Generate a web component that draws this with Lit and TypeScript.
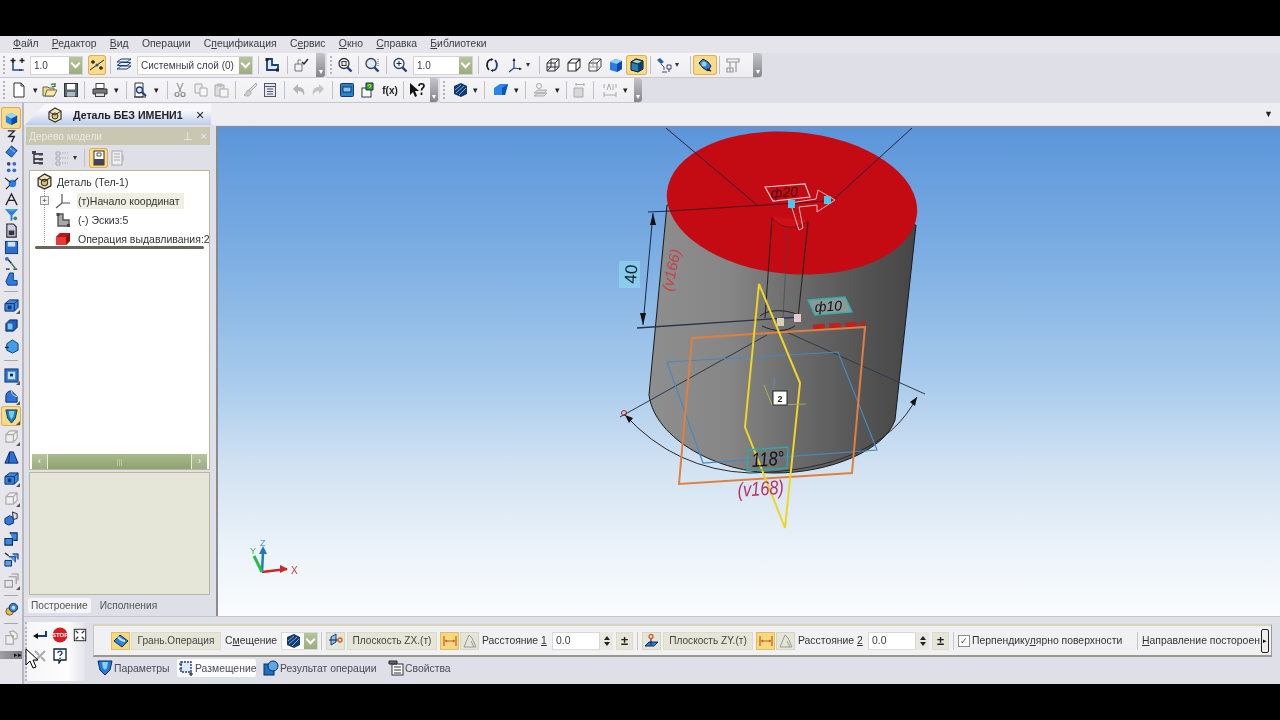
import { LitElement, html, css, svg, nothing } from 'lit';
import { customElement } from 'lit/decorators.js';

const NAVY = '#1c3f7c';

// all icons are drawn on a 16x16 grid
const ICONS: Record<string, unknown> = {
  snap: svg`<path d="M4 4v9h9" fill="none" stroke="#2a4f8f" stroke-width="1.6"/><path d="M4 1v5M1.500 3.500h5M13 1v5M10.500 3.500h5" stroke="#222" stroke-width="1.400"/><path d="M10 13h5" stroke="#222"/>`,
  snapOn: svg`<path d="M1 13L15 3" stroke="#222"/><path d="M4 3v4M2 5h4M12 9v4M10 11h4" stroke="#222" stroke-width="1.300"/><circle cx="8" cy="8" r="1.500" fill="#2a4f8f"/>`,
  layers: svg`<path d="M1 5l4-3h10l-4 3zM1 8.500l4-3h10l-4 3zM1 12l4-3h10l-4 3z" fill="#e8eefc" stroke="${NAVY}"/>`,
  sketch: svg`<path d="M3 2v11h11V8H8V2z" fill="#dfe8f8" stroke="${NAVY}" stroke-width="1.800"/><rect x="1.500" y="1" width="3" height="3" fill="#222"/><rect x="12" y="11.500" width="3" height="3" fill="#222"/>`,
  checkSk: svg`<path d="M2 14V7h7v7zM5 7V3h3" fill="none" stroke="#777"/><path d="M9 5l2 2 4-5" fill="none" stroke="#222" stroke-width="1.400"/>`,
  zoomBox: svg`<circle cx="7" cy="6.500" r="5" fill="#eef3fb" stroke="#333" stroke-width="1.300"/><path d="M10.500 10.500l4 4" stroke="${NAVY}" stroke-width="2.400"/><rect x="5" y="4.500" width="4" height="4" fill="none" stroke="#333"/>`,
  zoomAll: svg`<circle cx="7" cy="6.500" r="5" fill="#dfe9f8" stroke="#345" stroke-width="1.300"/><path d="M10.500 10.500l4 4" stroke="${NAVY}" stroke-width="2.400"/><path d="M14 2v7" stroke="#555" stroke-dasharray="1 1"/>`,
  zoomIn: svg`<circle cx="7" cy="6.500" r="5" fill="#eef3fb" stroke="#345" stroke-width="1.300"/><path d="M10.500 10.500l4 4" stroke="${NAVY}" stroke-width="2.400"/><path d="M4.500 6.500h5M7 4v5" stroke="#222"/>`,
  rotate: svg`<path d="M7 2.500C3 3 1.500 9 5 13" fill="none" stroke="#222" stroke-width="1.700"/><path d="M9 13.500C13 13 14.500 7 11 3" fill="none" stroke="${NAVY}" stroke-width="1.700"/><path d="M7 1v3L9.500 2.500zM9 15v-3L6.500 13.500z" fill="#222"/>`,
  axes: svg`<path d="M7 2v9M7 11l7 1M7 11l-5 4" stroke="${NAVY}" stroke-width="1.200" fill="none"/><path d="M5.500 4L7 1l1.500 3zM12 10.500l3 1.500-3 1z" fill="#222"/>`,
  wire: svg`<path d="M2 6l4-4h8v8l-4 4H2zM2 6h8v8M10 6l4-4M6 2v8H2M6 10h8M6 10l-4 4" fill="none" stroke="#333"/>`,
  hidden: svg`<path d="M2 6l4-4h8v8l-4 4H2zM2 6h8v8M10 6l4-4" fill="#fff" stroke="#333" stroke-width="1.100"/>`,
  thin: svg`<path d="M2 6l4-4h8v8l-4 4H2zM2 6h8v8M10 6l4-4" fill="#f4f4f4" stroke="#444"/><path d="M6 2v8H2M6 10h8" fill="none" stroke="#999"/>`,
  solid: svg`<path d="M2 5l5-3 7 2v8l-5 3-7-2z" fill="#2b7be4"/><path d="M2 5l7 2 5-3-7-2z" fill="#8fd0fa"/><path d="M9 7v8l5-3V4z" fill="#0f46a8"/>`,
  shaded: svg`<path d="M2 5l5-3 7 2v8l-5 3-7-2z" fill="#2a7fb8" stroke="#111"/><path d="M2 5l7 2 5-3-7-2z" fill="#90d4e0" stroke="#111"/><path d="M9 7v8l5-3V4z" fill="#0c3f70"/>`,
  lamp: svg`<path d="M1 3l3-2 4 4-3 2z" fill="#2a5fa8"/><path d="M5 7l3 3v3M6 15h5M11 8h4v4h-4zM13 12v3" fill="none" stroke="#446"/>`,
  mate: svg`<path d="M2 6l4-4 5 3 3 4-3 5-5-3z" fill="#2f7bd8" stroke="#123"/><circle cx="7" cy="7" r="2.500" fill="#8cd3f0"/><path d="M10 12l4 2" stroke="#222" stroke-width="1.500"/>`,
  grayTool: svg`<path d="M2 2h12v3H2zM5 5v10M11 5v10M2 11h6v4H2z" fill="none" stroke="#999" stroke-width="1.200"/>`,
  file: svg`<path d="M3 1h7l3 3v11H3z" fill="#fff" stroke="#333"/><path d="M10 1v3h3" fill="none" stroke="#333"/>`,
  open: svg`<path d="M1 5h5l1 1h5v8H1z" fill="#f3d98a" stroke="#665"/><path d="M3 14l2-6h10l-3 6z" fill="#fbe9a8" stroke="#665"/><path d="M9 3c2-2 4-1 4 1M13 1v3.500h-3" fill="none" stroke="#2a7a3a" stroke-width="1.200"/>`,
  save: svg`<rect x="1.500" y="1.500" width="13" height="13" fill="#586878" stroke="#333"/><rect x="4" y="2" width="8" height="5.500" fill="#fff"/><rect x="4" y="10" width="8" height="4.500" fill="#b0b8c0"/>`,
  print: svg`<rect x="4" y="1.500" width="8" height="5" fill="#fff" stroke="#444"/><path d="M1 7h14v5H1z" fill="#77797f" stroke="#333"/><rect x="3.500" y="11" width="9" height="3.500" fill="#ddd" stroke="#444"/>`,
  preview: svg`<path d="M3 1h8v14H3z" fill="#fff" stroke="#334"/><circle cx="7.500" cy="8" r="3" fill="#dfe9f8" stroke="${NAVY}" stroke-width="1.300"/><path d="M10 10l4 4" stroke="${NAVY}" stroke-width="2"/><path d="M2 15h12" stroke="#334"/>`,
  cut: svg`<path d="M5 1l4 9M11 1L7 10" stroke="#999" stroke-width="1.200"/><circle cx="5" cy="12.500" r="2" fill="none" stroke="#888" stroke-width="1.200"/><circle cx="11" cy="12.500" r="2" fill="none" stroke="#888" stroke-width="1.200"/>`,
  copy: svg`<path d="M2 2h7v9H2z" fill="#eee" stroke="#aaa"/><path d="M7 6h7v8H7z" fill="#f6f6f6" stroke="#aaa"/>`,
  paste: svg`<path d="M2 3h9v11H2z" fill="#ddd" stroke="#aaa"/><rect x="4" y="1.500" width="5" height="3" fill="#bbb"/><path d="M7 7h8v8H7z" fill="#f4f4f4" stroke="#aaa"/>`,
  brush: svg`<path d="M14 1L7 8l1.500 1.500L15 3z" fill="#ddd" stroke="#aaa"/><path d="M7 8c-3 0-2 4-5 5 3 2 7 1 7-3z" fill="#ccc" stroke="#aaa"/>`,
  list: svg`<rect x="2.500" y="1.500" width="11" height="13" fill="#dfe6f0" stroke="#556"/><path d="M2.500 4.500h11M5 7h6M5 9.500h6M5 12h6" stroke="#556"/>`,
  undo: svg`<path d="M2 7l5-5v3c5 0 7 3 6 9-1-4-3-5-6-5v3z" fill="#b4b4b4"/>`,
  redo: svg`<path d="M14 7L9 2v3C4 5 2 8 3 14c1-4 3-5 6-5v3z" fill="#c4c4c4"/>`,
  blueBox: svg`<rect x="1.500" y="1.500" width="13" height="13" rx="1" fill="#2a7fc8" stroke="#123a70"/><rect x="4" y="5" width="8" height="5" fill="#7fc4ec" stroke="#123a70"/>`,
  treeQ: svg`<rect x="2" y="6" width="9" height="9" fill="#fff" stroke="#334"/><path d="M6 1h7v7H6z" fill="#3a9a4a" stroke="#134"/><path d="M8 4c0-2 3-2 3 0 0 1-1.500 1-1.500 2" fill="none" stroke="#ff0"/>`,
  helpPtr: svg`<path d="M1 1l0 12 3-3 2 5 2-1-2-5h4z" fill="#111"/><path d="M10 4c0-3 5-3 5 0 0 2-2.500 2-2.500 4.500M12.500 10.500v2.500" fill="none" stroke="#111" stroke-width="1.700"/>`,
  hatch: svg`<path d="M2 4l7-3 6 3v8l-6 3-7-3z" fill="#123a70"/><path d="M3 8l6-5M4 11l8-7M7 13l7-7" stroke="#7fb0e0"/>`,
  wedge: svg`<path d="M1 6l6-4h8l-3 11H1z" fill="#2b86e4"/><path d="M9 6l6-4-3 11H9z" fill="#0f54b8"/>`,
  grayStack: svg`<circle cx="6" cy="4" r="2.500" fill="none" stroke="#aaa"/><path d="M1 11l4-3h9l-3 3zM1 14l4-3h9l-3 3z" fill="#ddd" stroke="#aaa"/>`,
  grayDim: svg`<path d="M2 6v9h9V6zM4 1v3M12 1v3M4 2.500h8" fill="#d8d8d8" stroke="#aaa"/>`,
  grayA: svg`<path d="M2 2v4M14 2v4M2 13h12M2 10v5M14 10v5" stroke="#aaa"/><path d="M5 8l2-6 2 6M11 2v6" fill="none" stroke="#aaa"/>`,
  part: svg`<path d="M2 5l6-4 6 3v8l-6 3-6-3z" fill="#f2e6b8" stroke="#333" stroke-width="1.200"/><circle cx="8" cy="9" r="3" fill="#d8c070" stroke="#333"/><path d="M2 5l6 3 6-4" fill="none" stroke="#333"/>`,
  treeTool: svg`<path d="M4 1v13M4 4h5M4 9h5M4 13h5" stroke="#222" stroke-width="1.300"/><rect x="2" y="1" width="4" height="3" fill="#445"/><rect x="9" y="3" width="4" height="2.500" fill="#445"/><rect x="9" y="8" width="4" height="2.500" fill="#445"/><rect x="9" y="12" width="4" height="2.500" fill="#445"/>`,
  treeGray: svg`<path d="M2 2h4v3H2zM2 7h4v3H2zM2 12h4v3H2z" fill="none" stroke="#aaa"/><path d="M8 3h6M8 8h6M8 13h6" stroke="#aaa" stroke-dasharray="1.500 1"/>`,
  treeDoc: svg`<rect x="3" y="1" width="10" height="14" fill="#fff" stroke="#333"/><rect x="3" y="9" width="10" height="6" fill="#445"/><path d="M6 3h4v3H6z" fill="none" stroke="#555"/>`,
  treeDoc2: svg`<rect x="2" y="1" width="10" height="14" fill="#eee" stroke="#aaa"/><path d="M4 4h6M4 7h6M4 10h6M13 5v6" stroke="#aaa"/>`,
  origin: svg`<path d="M7 1v9H15M7 10L1 15" fill="none" stroke="#555" stroke-width="1.200"/>`,
  sketchGray: svg`<path d="M3 2v12h11V8H8V2z" fill="#a8a8a8" stroke="#555" stroke-width="1.400"/><rect x="1.500" y="1" width="3" height="3" fill="#444"/><rect x="12" y="12" width="3" height="3" fill="#444"/>`,
  redCube: svg`<path d="M1 6l4-4h10v8l-4 4H1z" fill="#e83838"/><path d="M1 6l4-4h10l-4 4z" fill="#b81818"/><path d="M11 6l4-4v8l-4 4z" fill="#901010"/>`,
  railSel: svg`<path d="M2 5l6-3 6 3v7l-6 3-6-3z" fill="#2b86e4"/><path d="M2 5l6 3 6-3-6-3z" fill="#8fd8fa"/><path d="M8 8v7l6-3V5z" fill="#0c4ca8"/>`,
  squiggle: svg`<path d="M4 2h7L5 8h6l-3 6" fill="none" stroke="#223" stroke-width="1.400"/>`,
  diamond: svg`<path d="M2 9l6-7 6 5-6 7z" fill="#2b7be4" stroke="#123a70"/><path d="M6 4l6 5" stroke="#9cd4f4"/>`,
  dots: svg`<circle cx="5" cy="4" r="2" fill="#446"/><circle cx="11" cy="4" r="2" fill="#2b6fd0"/><circle cx="5" cy="11" r="2" fill="#2b6fd0"/><circle cx="11" cy="11" r="2" fill="#2b6fd0"/>`,
  plug: svg`<circle cx="9" cy="8" r="4" fill="#2b7be4"/><path d="M1 2l6 5M15 2l-4 4M2 14l4-4" stroke="#223" stroke-width="1.300"/>`,
  compass: svg`<path d="M2 14L8 2l6 12M5 9h6" fill="none" stroke="#223" stroke-width="1.400"/>`,
  funnel: svg`<path d="M1 2h14L9 9v5l-2 1V9z" fill="#2b7be4"/><path d="M1 2l7 3 7-3" fill="#4ac" /><circle cx="12" cy="12" r="2" fill="#3a8a4a"/>`,
  docTool: svg`<path d="M3 1h7l3 3v11H3z" fill="#ccd" stroke="#223" stroke-width="1.200"/><path d="M5 8h6v5H5z" fill="#334"/>`,
  floppy: svg`<rect x="1.500" y="1.500" width="13" height="13" fill="#2b6fd0" stroke="#123a70"/><rect x="4" y="2" width="8" height="5" fill="#cfe4fa"/>`,
  route: svg`<path d="M3 2l5 6M2 14h4M10 14h4" stroke="#223" stroke-width="1.400"/><circle cx="3" cy="3" r="2" fill="#2b6fd0"/><path d="M8 8l4 5" stroke="#2a8a4a" stroke-width="1.500"/>`,
  sock: svg`<path d="M6 1h4v8h4v5H4l-2-4z" fill="#2b7be4" stroke="#123a70"/>`,
  extr: svg`<path d="M1 6l5-4h9v8l-4 4H1z" fill="#3a88e0" stroke="#0f2f68"/><path d="M1 6h10v8M11 6l4-4" fill="none" stroke="#0f2f68"/><rect x="4" y="8" width="4" height="4" fill="#123a70"/>`,
  boxIn: svg`<path d="M2 6l4-4h8v8l-4 4H2z" fill="#1f5fc0" stroke="#0c2a60"/><rect x="4" y="6" width="5" height="6" fill="#7fc4ec"/>`,
  boxCut: svg`<path d="M3 5l6-4 6 4v7l-6 3-6-3z" fill="#3fa0e8" stroke="#0c3a70"/><path d="M1 9h4" stroke="#222" stroke-width="1.500"/>`,
  frame: svg`<rect x="1" y="1" width="14" height="14" fill="#2f74c4" stroke="#0c3a70"/><rect x="4" y="4" width="8" height="8" fill="#bfe0f8"/><rect x="6.500" y="6" width="3" height="3" fill="#124"/>`,
  round: svg`<path d="M2 14V7c0-3 3-5 6-5l6 6v6z" fill="#2f74d4" stroke="#0c2a60"/><path d="M8 2c0 4 3 6 6 6" fill="none" stroke="#bfe0f8"/>`,
  shield: svg`<path d="M2 1h12l-2 9-4 5-4-5z" fill="#1f82c0" stroke="#0c3a60"/><path d="M5 2h6l-1 6-2 3-2-3z" fill="#6fd0e8"/>`,
  grayBox: svg`<path d="M2 6l4-4h8v8l-4 4H2zM2 6h8v8M10 6l4-4" fill="#eee" stroke="#aaa" stroke-width="1.200"/>`,
  prism: svg`<path d="M1 14L6 2h4l5 12z" fill="#2b6fd8" stroke="#0c2a60"/><path d="M6 2l-1 12" stroke="#0c2a60"/>`,
  gear3: svg`<path d="M1 8l5-3 4 2v6l-5 2-4-2z" fill="#2b7be4" stroke="#0c2a60"/><path d="M9 1l5 2v5l-4 1z" fill="#dde" stroke="#223"/>`,
  double: svg`<path d="M1 8h8v7H1zM6 2h8v8h-4" fill="#3a8ae4" stroke="#0c2a60" stroke-width="1.200"/>`,
  triple: svg`<path d="M1 9h7v6H1zM5 5h7v6M9 2h6v6" fill="#5aa0e8" stroke="#0c2a60"/><path d="M1 1l4 3" stroke="#222" stroke-width="1.500"/>`,
  grayCopy: svg`<path d="M1 8h8v7H1zM5 4h8v8M8 1h7v7" fill="none" stroke="#999" stroke-width="1.200"/>`,
  rings: svg`<circle cx="6" cy="10" r="4" fill="#e8b848" stroke="#654"/><circle cx="10" cy="6" r="4.500" fill="#2b86d4" stroke="#0c2a60"/><circle cx="10" cy="6" r="2" fill="#bfe0f8"/>`,
  grayPage: svg`<path d="M2 6h8v9H2zM6 2l4-1 4 3v5l-4 1z" fill="#eee" stroke="#aaa" stroke-width="1.200"/>`,
  enter: svg`<path d="M14 4v5H5" fill="none" stroke="#123a90" stroke-width="2"/><path d="M1 9l5-3v6z" fill="#111"/>`,
  stop: svg`<circle cx="8" cy="8" r="7.500" fill="#d81c24"/>`,
  expand: svg`<rect x="1.500" y="1.500" width="13" height="13" fill="#fff" stroke="#333" stroke-width="1.200"/><path d="M3 3l3 3M13 3l-3 3M3 13l3-3M13 13l-3-3" stroke="#333" stroke-width="1.400"/>`,
  grayX: svg`<path d="M3 13L13 3M3 3l4 4M9 9l4 4" stroke="#aaa" stroke-width="2"/>`,
  help: svg`<path d="M2 1h12v11H9l-2 3v-3H2z" fill="#fff" stroke="#123" stroke-width="1.300"/><path d="M6 5c0-2.500 4-2.500 4 0 0 1.500-2 1.500-2 3M8 9.500v1.500" fill="none" stroke="#123a90" stroke-width="1.400"/>`,
  face: svg`<path d="M1 8l6-6 8 6-6 6z" fill="#2f84d8" stroke="#0c2a60"/><path d="M5 4c2 2 5 4 7 4" stroke="#bfe4fa" stroke-width="2" fill="none"/>`,
  plane1: svg`<path d="M3 12V4l5-3v8z" fill="#8fc0f0" stroke="#123a90"/><path d="M1 7h9" stroke="#123" /><circle cx="12" cy="7" r="2" fill="none" stroke="#d85a20" stroke-width="1.300"/>`,
  plane2: svg`<path d="M1 13l4-4h9l-4 4z" fill="#2b7be4" stroke="#0c2a60"/><path d="M7 5v7" stroke="#123"/><circle cx="7" cy="3.500" r="2" fill="none" stroke="#d85a20" stroke-width="1.300"/>`,
  offs: svg`<path d="M2 3v10M14 3v10M3 8h10" stroke="#c85a20" stroke-width="1.200"/><path d="M3 8l2-1.500v3zM13 8l-2-1.500v3z" fill="#c85a20"/>`,
  angle: svg`<path d="M2 14L7 2l3 3 4 9zM9 8l3 6" fill="none" stroke="#999"/>`,
  params: svg`<path d="M1 1h14l-2 9-5 5-5-5z" fill="#2a78d8" stroke="#0c2a60"/><path d="M5 2h6l-1 6-2 2-2-2z" fill="#80d4f0"/>`,
  place: svg`<rect x="3" y="2" width="10" height="10" fill="#dfe8f8" stroke="${NAVY}" stroke-width="1.400" stroke-dasharray="2 1"/><path d="M1 4h3M1 9h3M11 14h4M13 12v4" stroke="#123" stroke-width="1.200"/>`,
  result: svg`<rect x="1" y="4" width="10" height="11" fill="#1f6fc0" stroke="#0c2a60"/><circle cx="10" cy="6" r="5" fill="#5aa8e8" stroke="#0c2a60"/>`,
  props: svg`<rect x="4" y="4" width="11" height="11" fill="#fff" stroke="#333"/><path d="M6 7h7M6 10h7M6 13h7" stroke="#333"/><path d="M1 1h8v3H1z" fill="#667" stroke="#222"/>`,
};

type Item =
  | { t: 'grip'; w: number }
  | { t: 'btn'; i: string; w: number; sel?: boolean; caret?: boolean }
  | { t: 'sep'; w: number }
  | { t: 'gap'; w: number }
  | { t: 'combo'; text: string; w: number }
  | { t: 'chev'; w: number }
  | { t: 'text'; text: string; w: number; bold?: boolean };

const grip = (w = 8): Item => ({ t: 'grip', w });
const btn = (i: string, w: number, o: { sel?: boolean; caret?: boolean } = {}): Item => ({ t: 'btn', i, w, ...o });
const sep = (w = 6): Item => ({ t: 'sep', w });
const gap = (w: number): Item => ({ t: 'gap', w });
const combo = (text: string, w: number): Item => ({ t: 'combo', text, w });
const chev = (w = 9): Item => ({ t: 'chev', w });
const caret = (w: number): Item => ({ t: 'text', text: '▾', w });

const ROW1A: Item[] = [
  grip(), btn('snap', 18), gap(4), combo('1.0', 53), gap(5), btn('snapOn', 18, { sel: true }), sep(8),
  btn('layers', 20), gap(3), combo('Системный слой (0)', 116), sep(10), btn('sketch', 18), sep(12),
  btn('checkSk', 16), gap(7), chev(),
];
const ROW1B: Item[] = [
  grip(), btn('zoomBox', 20), sep(6), btn('zoomAll', 22), sep(6), btn('zoomIn', 22), gap(2), combo('1.0', 60), sep(10),
  btn('rotate', 18), btn('axes', 35, { caret: true }), sep(6), btn('wire', 21), btn('hidden', 21), btn('thin', 21),
  btn('solid', 21), btn('shaded', 21, { sel: true }), sep(6), btn('lamp', 28, { caret: true }), gap(6), sep(6),
  btn('mate', 24, { sel: true }), sep(4), btn('grayTool', 24), gap(8), chev(),
];
const ROW2A: Item[] = [
  grip(), btn('file', 22), caret(10), btn('open', 20), btn('save', 21), sep(6),
  btn('print', 25), caret(8), sep(12), btn('preview', 16), caret(16), sep(6),
  btn('cut', 20), btn('copy', 22), btn('paste', 18), sep(10), btn('brush', 19), btn('list', 22), sep(6),
  btn('undo', 24), btn('redo', 14), sep(14), btn('blueBox', 16), btn('treeQ', 26), { t: 'text', text: 'f(x)', w: 18, bold: true }, sep(8),
  btn('helpPtr', 20), gap(3), chev(8),
];
const ROW2B: Item[] = [
  grip(), gap(4), btn('hatch', 16), caret(14), sep(4), gap(7), btn('wedge', 16), caret(14), sep(4), gap(6),
  btn('grayStack', 16), caret(16), sep(2), gap(5), btn('grayDim', 16), sep(10), gap(4), btn('grayA', 16), caret(14), gap(2), chev(8),
];

// [icon, cell height, selected, corner tick]; '-' is a separator
const RAIL: Array<[string, number, boolean?, boolean?]> = [
  ['railSel', 22, true], ['squiggle', 14], ['diamond', 16], ['dots', 16], ['plug', 16], ['compass', 16], ['funnel', 15],
  ['docTool', 17], ['floppy', 16], ['route', 17], ['sock', 15], ['-', 9], ['extr', 19, false, true], ['boxIn', 20], ['boxCut', 22],
  ['-', 7], ['frame', 22, false, true], ['round', 20, false, true], ['shield', 20, true, true], ['grayBox', 21, false, true], ['prism', 21],
  ['extr', 20, false, true], ['grayBox', 20, false, true], ['gear3', 21], ['double', 19], ['triple', 22], ['grayCopy', 21, false, true],
  ['-', 9], ['rings', 19], ['-', 9], ['grayPage', 18],
];

const PROP_TABS = [
  { i: 'params', label: 'Параметры', w: 81, mr: 0 },
  { i: 'place', label: 'Размещение', w: 79, mr: 6, active: true },
  { i: 'result', label: 'Результат операции', w: 118, mr: 7 },
  { i: 'props', label: 'Свойства', w: 70, mr: 0 },
];

function icon(name: string, size = 16) {
  return html`<svg class="ic" viewBox="0 0 16 16" width=${size} height=${size}>${ICONS[name]}</svg>`;
}

@customElement('cad-view')
export class CadView extends LitElement {
  static styles = css`
    :host { display: block; height: 100%; }
    .canvas { display: block; background: linear-gradient(#5b95da 0%, #83b2e4 30%, #a9cbec 52%, #d3e3f2 70%, #eef4fa 88%, #fafcfe 100%); }
    text { font-family: 'Liberation Sans', sans-serif; }
  `;

  render() {
    return html`<svg class="canvas" viewBox="218 127 1062 490" width="1062" height="490">
      <defs>
        <linearGradient id="body" x1="0" x2="1" y1="0" y2="0">
          <stop offset="0" stop-color="#8e8e8e"/><stop offset=".3" stop-color="#868686"/>
          <stop offset=".55" stop-color="#6b6b6b"/><stop offset=".85" stop-color="#505050"/><stop offset="1" stop-color="#464646"/>
        </linearGradient>
      </defs>
      <path d="M667 205L649 395C655 440 720 473 775 473C830 473 885 450 895 420L916 225Z" fill="url(#body)" stroke="#1a1a1a"/>
      <ellipse cx="792" cy="203" rx="125.500" ry="71" transform="rotate(5 792 203)" fill="#c40a12"/>
      <path d="M666 128L757 205M912 128L833 200" stroke="#2b2038"/>
      <path d="M670 211L827 201" stroke="#4a1020"/>
      <path d="M648 212L670 211" stroke="#1b2b4a"/>
      <path d="M772 218L765 318M808 222L798 318" stroke="#222"/>
      <path d="M788 225L783 318" stroke="#444" stroke-width=".6"/>
      <path d="M772 217C780 230 800 230 808 220" fill="#d01018" stroke="#801018"/>
      <path d="M653 213L643 325" stroke="#142a4a"/>
      <path d="M653 213l-3 12 6 0zM643 325l-3-12 6 0z" fill="#111"/>
      <path d="M637 328L800 317" stroke="#27364a" stroke-width="1.400"/>
      <rect x="619" y="261" width="21" height="27" fill="#8fdcf0" opacity=".6"/>
      <text transform="translate(636 284) rotate(-86)" font-size="17" fill="#123">40</text>
      <text transform="translate(672 292) rotate(-78)" font-size="15" font-style="italic" fill="#c84048">(v166)</text>
      <path d="M765 187L805 184L810 197L773 201Z" fill="none" stroke="#f0c8c8" stroke-width="1.200"/>
      <text transform="translate(771 198) rotate(-4)" font-size="14" font-style="italic" fill="#401018">ф20</text>
      <path d="M790 203L816 199L818 190L835 200L817 212L817 205L799 207L803 228L799 230L792 208Z" fill="none" stroke="#eeb8b8"/>
      <rect x="788" y="200" width="7" height="8" fill="#48c8ec"/><rect x="824" y="196" width="7" height="8" fill="#48c8ec"/>
      <path d="M808 300L845 297L852 312L815 315Z" fill="#8a9a98" stroke="#2fb0a8" stroke-width="1.400"/>
      <text transform="translate(815 312) rotate(-4)" font-size="14" font-style="italic" fill="#111">ф10</text>
      <path d="M760 316C770 308 790 310 800 316M762 326C775 332 785 332 795 326" fill="none" stroke="#222"/>
      <rect x="777" y="318" width="7" height="8" fill="#d8d0b8"/><rect x="794" y="314" width="7" height="8" fill="#e8c8d0"/>
      <path d="M813 327L865 324" stroke="#c02020" stroke-width="5" stroke-dasharray="12 4"/>
      <path d="M620 417L767 335M782 330L925 394" stroke="#2d3a48"/>
      <path d="M625 415Q675 470 750 473Q880 470 917 397" fill="none" stroke="#2a2a30"/>
      <path d="M625 415l8 3-4 5zM917 397l-2 9-5-4z" fill="#111"/>
      <circle cx="624" cy="413" r="2.500" fill="none" stroke="#b02020"/>
      <path d="M667 362L838 352L877 450L703 463Z" fill="none" stroke="#4a88bc" stroke-width="1.200"/>
      <path d="M692 338L865 327L852 473L679 484Z" fill="none" stroke="#e08040" stroke-width="2"/>
      <path d="M759 284L800 383L785 528L745 427Z" fill="none" stroke="#efd524" stroke-width="2"/>
      <path d="M764 385L772 405" stroke="#a8b848"/><path d="M772 405L806 404" stroke="#b89880"/><path d="M774 377V391" stroke="#5a90b8"/>
      <rect x="773" y="391" width="14" height="14" fill="#fff" stroke="#222"/>
      <text x="780" y="402" font-size="9" font-weight="bold" text-anchor="middle" fill="#222">2</text>
      <path d="M748 450L788 447L787 468L747 471Z" fill="none" stroke="#2fa8a8" stroke-width="1.400"/>
      <text transform="translate(752 467) rotate(-4) scale(.82 1)" font-size="20" font-style="italic" fill="#111">118°</text>
      <text transform="translate(738 497) rotate(-4) scale(.82 1)" font-size="20" font-style="italic" fill="#b83060">(v168)</text>
      <path d="M262 572L287 569" stroke="#c82828" stroke-width="2.500"/><path d="M280 565L288 569L280 573Z" fill="#c82828"/>
      <path d="M262 572L263 552" stroke="#1f7ab8" stroke-width="2.500"/><path d="M259 554L263 546L267 554Z" fill="#1f7ab8"/>
      <path d="M262 572L254 556" stroke="#20c040" stroke-width="3"/>
      <text x="291" y="574" font-size="10" fill="#c83838">X</text>
      <text x="260" y="546" font-size="9" fill="#4a9ad0">Z</text>
      <text x="250" y="554" font-size="9" fill="#40b050">Y</text>
    </svg>`;
  }
}

@customElement('app-root')
export class AppRoot extends LitElement {
  static styles = css`
    :host {
      display: block;
      width: 1280px;
      height: 720px;
      overflow: hidden;
      background: #000;
      font-family: 'Liberation Sans', Arial, sans-serif;
      font-size: 10px;
      color: #3c3c44;
    }
    .ic { display: block; flex: none; }
    .app {
      position: relative;
      margin-top: 36px;
      height: 648px;
      background: #dfdfe7;
      display: flex;
      flex-direction: column;
      filter: blur(0.3px);
    }
    .menu {
      height: 17px;
      display: flex;
      align-items: center;
      padding: 0 0 3px 13px;
      box-sizing: border-box;
      gap: 13.25px;
      font-size: 10.4px;
      background: #e4e4ea;
      flex: none;
    }
    .tb-row { height: 25px; display: flex; flex: none; gap: 2px; }
    .tb-row.first { align-items: flex-end; }
    .tb {
      display: flex;
      align-items: center;
      background: linear-gradient(#f6f6f8, #eeeef2);
      border-radius: 0 4px 4px 0;
      border-bottom: 1px solid #c6c6cc;
      height: 24px;
    }
    .grip { height: 18px; position: relative; flex: none; }
    .grip::before {
      content: '';
      position: absolute;
      left: 3px;
      top: 0;
      bottom: 0;
      border-left: 2px dotted #b4b4bc;
    }
    .btn { height: 20px; display: flex; align-items: center; justify-content: center; gap: 3px; flex: none; border-radius: 3px; }
    .btn.sel { background: #f8dc8c; box-shadow: inset 0 0 0 1px #e0b050; }
    .caret { font-size: 8px; color: #333; line-height: 1; }
    .sep { height: 18px; flex: none; display: flex; justify-content: center; }
    .sep::before { content: ''; border-left: 1px solid #c0c0c8; }
    .combo {
      height: 19px;
      box-sizing: border-box;
      background: #fff;
      border: 1px solid #d4d4d0;
      display: flex;
      align-items: center;
      padding-left: 3px;
      flex: none;
      overflow: hidden;
      white-space: nowrap;
    }
    .combo span { flex: 1; overflow: hidden; }
    .combo-btn {
      width: 13px;
      align-self: stretch;
      background: linear-gradient(#b8c49c, #9dac80);
      display: flex;
      align-items: center;
      justify-content: center;
      flex: none;
    }
    .combo-btn::before {
      content: '';
      width: 5px;
      height: 5px;
      margin-top: -3px;
      border-right: 2px solid #fff;
      border-bottom: 2px solid #fff;
      transform: rotate(45deg);
    }
    .chev {
      height: 24px;
      flex: none;
      border-radius: 0 3px 3px 0;
      background: linear-gradient(#c4c4ca, #85858c);
      display: flex;
      align-items: flex-end;
      justify-content: center;
      color: #fff;
      font-size: 8px;
      line-height: 10px;
    }
    .tbtext { text-align: center; flex: none; color: #222; font-size: 9px; }
    .tbtext.bold { font-weight: bold; font-size: 10px; }

    .body { flex: 1; display: flex; min-height: 0; }
    .rail {
      width: 24px;
      flex: none;
      box-sizing: border-box;
      padding-top: 4px;
      background: #e6e6ec;
      border-right: 2px solid #b8b8c0;
      display: flex;
      flex-direction: column;
      align-items: center;
    }
    .rail-cell { display: flex; align-items: center; justify-content: center; width: 20px; flex: none; position: relative; border-radius: 3px; }
    .rail-cell.sel { background: #f8dc8c; box-shadow: inset 0 0 0 1px #dcae50; }
    .rail-cell.tick::after {
      content: '';
      position: absolute;
      right: 1px;
      bottom: 1px;
      border: 2px solid transparent;
      border-right-color: #555;
      border-bottom-color: #555;
    }
    .rail-sep { width: 14px; border-top: 1px solid #a8a8b0; align-self: center; }
    .rail-end {
      margin-top: 5px;
      width: 22px;
      height: 8px;
      background: linear-gradient(90deg, #a0a0a6, #77777d);
      color: #111;
      font-size: 7px;
      line-height: 8px;
      text-align: right;
      align-self: flex-start;
    }

    .main { flex: 1; display: flex; flex-direction: column; min-width: 0; }
    .tabs { height: 22px; display: flex; flex: none; background: #eeeef2; position: relative; }
    .tab {
      width: 186px;
      margin-left: 1px;
      height: 21px;
      margin-top: 1px;
      background: linear-gradient(#f8f8fc 30%, #bccdea);
      clip-path: polygon(0 100%, 20px 0, 100% 0, 100% 100%);
      display: flex;
      align-items: center;
      padding-left: 22px;
      box-sizing: border-box;
    }
    .tab-title { margin-left: 10px; font-weight: bold; font-size: 10.6px; color: #222; white-space: nowrap; width: 110px; }
    .tab-x { margin-left: 13px; font-size: 14px; color: #222; line-height: 1; }
    .tabs-down { margin-left: auto; margin-right: 7px; align-self: center; color: #222; font-size: 9px; }
    .content { flex: 1; display: flex; min-height: 0; background: #dfdfe7; }
    .panel {
      width: 188px;
      flex: none;
      padding: 2px 2px 0 2px;
      box-sizing: border-box;
      display: flex;
      flex-direction: column;
    }
    .panel-head {
      height: 18px;
      background: #c9c7b2;
      color: #e8e8e0;
      display: flex;
      align-items: center;
      padding: 0 3px;
      justify-content: space-between;
      flex: none;
      font-size: 10.2px;
    }
    .panel-actions { display: flex; gap: 8px; font-size: 11px; color: #eee; }
    .panel-tools { height: 25px; display: flex; align-items: center; padding-left: 3px; flex: none; }
    .tree {
      height: 300px;
      margin-left: 3px;
      background: #fff;
      border: 1px solid #b8b6a0;
      box-sizing: border-box;
      padding-top: 1px;
      flex: none;
      position: relative;
      overflow: hidden;
    }
    .tree-row { height: 19px; display: flex; align-items: center; white-space: nowrap; font-size: 10.5px; color: #333; }
    .tree-row.root { padding-left: 6px; gap: 4px; }
    .tree-row.child { padding-left: 25px; gap: 5px; }
    .tree-row.child .ic { margin-right: 1px; }
    .tree-row.child span { padding-left: 1px; }
    .tree-row.child span.hl { background: #efefe4; padding: 2px 4px 2px 1px; }
    .tree-line { position: absolute; left: 14px; top: 20px; height: 51px; border-left: 1px dotted #999; }
    .plus {
      position: absolute;
      left: 10px;
      top: 25px;
      width: 7px;
      height: 7px;
      border: 1px solid #999;
      background: #f4f4f0;
      color: #333;
      font-size: 8px;
      line-height: 7px;
      text-align: center;
    }
    .tree-bar { height: 3px; margin: -2px 5px 0; background: #66665f; border-radius: 2px; }
    .scroll {
      position: absolute;
      left: 2px;
      right: 2px;
      bottom: 0;
      height: 15px;
      display: flex;
      gap: 1px;
      background: #e8e8e0;
    }
    .scroll-b {
      width: 15px;
      background: linear-gradient(#b8c49c, #9dac80);
      color: #fff;
      font-size: 9px;
      line-height: 15px;
      text-align: center;
      flex: none;
    }
    .scroll-t { flex: 1; background: linear-gradient(#a8ba8a, #8fa270); text-align: center; color: #c8d4b8; font-size: 8px; line-height: 15px; }
    .hint { height: 123px; margin-left: 3px; margin-top: 2px; background: #e6e6d8; border: 1px solid #b8b69c; box-sizing: border-box; flex: none; }
    .pane-tabs { display: flex; margin-left: 2px; margin-top: 1px; height: 18px; align-items: center; gap: 6px; }
    .pane-tab { padding: 2px 3px; color: #555; font-size: 10.2px; }
    .pane-tab.active { background: #f4f4f6; border-radius: 2px; }
    .view { width: 1062px; margin-top: 2px; border-left: 2px solid #8c8c90; margin-left: 4px; margin-right: -2px; box-shadow: 0 -1px 0 #8c8c90; }

    .bottom { height: 68px; flex: none; display: flex; border-top: 1px solid #c4c4cc; background: #dfdfe7; box-sizing: border-box; padding-bottom: 3px; }
    .actions {
      width: 60px;
      margin-left: 1px;
      margin-top: 5px;
      background: linear-gradient(90deg, #f6f6f8, #fdfdfd 70%, #e4e4ea);
      border-left: 2px dotted #b4b4bc;
      display: grid;
      grid-template-columns: repeat(3, 20px);
      grid-auto-rows: 21px;
      align-content: start;
      justify-items: center;
      align-items: center;
      padding: 2px 0 0 3px;
      box-sizing: border-box;
    }
    .stop { position: relative; }
    .stop-t {
      position: absolute;
      inset: 0;
      color: #fff;
      font-size: 6px;
      font-weight: bold;
      text-align: center;
      line-height: 16px;
    }
    .prop-wrap { flex: 1; display: flex; flex-direction: column; margin-left: 8px; min-width: 0; }
    .prop {
      margin-top: 7px;
      margin-right: 8px;
      height: 33px;
      flex: none;
      box-sizing: border-box;
      background: #f1f1f3;
      border-top: 2px solid #d8d4bc;
      border-left: 1px solid #c4c4b8;
      border-right: 1px solid #9c9c90;
      border-bottom: 2px solid #98988c;
      display: flex;
      align-items: center;
      padding-left: 17px;
      white-space: nowrap;
    }
    .p-icon { width: 19px; height: 18px; display: flex; align-items: center; justify-content: center; flex: none; box-sizing: border-box; }
    .p-icon.on { background: #f6d87e; box-shadow: inset 0 0 0 1px #e2bc60; }
    .p-icon.off { background: #e6e6d8; box-shadow: inset 0 0 0 1px #d4d4c4; }
    .p-btn {
      height: 18px;
      background: #e6e6d8;
      border: 1px solid #dcdccc;
      box-sizing: border-box;
      display: flex;
      align-items: center;
      justify-content: center;
      flex: none;
      color: #444;
      font-size: 10.1px;
    }
    .p-label { flex: none; font-size: 10.4px; color: #333; }
    .p-input {
      width: 48px;
      height: 18px;
      background: #fff;
      border: 1px solid #d8d8d4;
      box-sizing: border-box;
      padding-left: 3px;
      line-height: 16px;
      flex: none;
      font-size: 10.4px;
    }
    .spin { width: 13px; height: 18px; background: #e8e8e0; flex: none; display: flex; flex-direction: column; align-items: center; justify-content: center; gap: 2px; }
    .spin i { display: block; width: 0; height: 0; border: 3px solid transparent; border-top: 0; border-bottom: 4px solid #222; }
    .spin i + i { transform: rotate(180deg); }
    .pm { width: 17px; height: 18px; background: #e6e6d8; border: 1px solid #dcdccc; box-sizing: border-box; flex: none; text-align: center; font-weight: bold; font-size: 13px; line-height: 15px; color: #222; margin-left: 3px; }
    .p-sep { width: 1px; height: 18px; background: #c8c8c0; flex: none; }
    .check {
      width: 12px;
      height: 12px;
      background: #fff;
      border: 1px solid #8c8c80;
      box-sizing: border-box;
      flex: none;
      font-size: 9px;
      line-height: 10px;
      text-align: center;
      color: #444;
    }
    .end { margin-left: 1px; width: 8px; height: 24px; border: 1px solid #222; border-radius: 2px; background: #eee; box-sizing: border-box; font-size: 7px; line-height: 22px; text-align: center; color: #000; flex: none; }
    .p-combo { width: 37px; height: 18px; background: #fff; flex: none; display: flex; border: 1px solid #d8d8d4; box-sizing: border-box; }
    .p-combo-ic { width: 22px; display: flex; justify-content: center; }
    .p-tabs { display: flex; height: 18px; margin-top: 2px; align-items: center; margin-left: 3px; font-size: 10.4px; }
    .p-tab { display: flex; align-items: center; height: 18px; flex: none; box-sizing: border-box; padding-left: 1px; color: #4c4c58; white-space: nowrap; gap: 1px; }
    .p-tab.active { background: #fbfbfd; border-radius: 2px; }
    .cursor { position: absolute; left: 25px; top: 612px; }
  `;

  private renderItems(items: Item[]) {
    return items.map((it) => {
      const w = `width:${it.w}px`;
      switch (it.t) {
        case 'grip': return html`<div class="grip" style=${w}></div>`;
        case 'sep': return html`<div class="sep" style=${w}></div>`;
        case 'gap': return html`<div style=${w}></div>`;
        case 'chev': return html`<div class="chev" style=${w}>▾</div>`;
        case 'text': return html`<div class="tbtext ${it.bold ? 'bold' : ''}" style=${w}>${it.text}</div>`;
        case 'combo': return html`<div class="combo" style=${w}><span>${it.text}</span><div class="combo-btn"></div></div>`;
        default: return html`<div class="btn ${it.sel ? 'sel' : ''}" style=${w}>${icon(it.i)}${it.caret ? html`<span class="caret">▾</span>` : nothing}</div>`;
      }
    });
  }

  private renderRail() {
    return html`<div class="rail">
      ${RAIL.map(([name, h, sel, tick]) => name === '-'
        ? html`<div class="rail-cell" style="height:${h}px"><div class="rail-sep"></div></div>`
        : html`<div class="rail-cell ${sel ? 'sel' : ''} ${tick ? 'tick' : ''}" style="height:${h}px">${icon(name, 15)}</div>`)}
      <div class="rail-end">▸▸</div>
    </div>`;
  }

  private renderTree() {
    return html`<div class="tree">
      <div class="tree-line"></div>
      <div class="plus">+</div>
      <div class="tree-row root">${icon('part', 17)}<span>Деталь (Тел-1)</span></div>
      <div class="tree-row child">${icon('origin')}<span class="hl">(т)Начало координат</span></div>
      <div class="tree-row child">${icon('sketchGray')}<span>(-) Эскиз:5</span></div>
      <div class="tree-row child">${icon('redCube')}<span>Операция выдавливания:2</span></div>
      <div class="tree-bar"></div>
      <div class="scroll">
        <div class="scroll-b">‹</div><div class="scroll-t">|||</div><div class="scroll-b">›</div>
      </div>
    </div>`;
  }

  private renderProp() {
    return html`<div class="prop">
      <div class="p-icon on">${icon('face')}</div>
      <div class="p-btn" style="width:90px;margin-left:1px">Грань.Операция</div>
      <div class="p-label" style="width:56px;margin-left:4px">С<u>м</u>ещение</div>
      <div class="p-combo"><div class="p-combo-ic">${icon('hatch')}</div><div class="combo-btn"></div></div>
      <div class="p-sep" style="margin:0 4px 0 3px"></div>
      <div class="p-icon off">${icon('plane1')}</div>
      <div class="p-btn" style="width:90px;margin-left:2px">Плоскость ZX.(т)</div>
      <div class="p-icon on" style="margin-left:3px">${icon('offs')}</div>
      <div class="p-icon off" style="margin-left:1px">${icon('angle')}</div>
      <div class="p-label" style="width:67px;margin-left:3px">Расстояние <u>1</u></div>
      <div class="p-input" style="margin-left:3px">0.0</div><div class="spin"><i></i><i></i></div>
      <div class="pm">±</div>
      <div class="p-sep" style="margin:0 4px"></div>
      <div class="p-icon off">${icon('plane2')}</div>
      <div class="p-btn" style="width:90px;margin-left:2px">Плоскость ZY.(т)</div>
      <div class="p-icon on" style="margin-left:3px">${icon('offs')}</div>
      <div class="p-icon off" style="margin-left:1px">${icon('angle')}</div>
      <div class="p-label" style="width:67px;margin-left:3px">Расстояние <u>2</u></div>
      <div class="p-input" style="margin-left:3px">0.0</div><div class="spin"><i></i><i></i></div>
      <div class="pm">±</div>
      <div class="p-sep" style="margin:0 4px"></div>
      <div class="check">✓</div>
      <div class="p-label" style="width:165px;margin-left:2px">Перпендику<u>л</u>ярно поверхности</div>
      <div class="p-sep"></div>
      <div class="p-label" style="width:118px;margin-left:4px"><u>Н</u>аправление посторoен</div>
      <div class="end">▸</div>
    </div>`;
  }

  render() {
    return html`<div class="app">
      <div class="menu">
        <span><u>Ф</u>айл</span><span><u>Р</u>едактор</span><span><u>В</u>ид</span><span>Операции</span><span>С<u>п</u>ецификация</span><span>С<u>е</u>рвис</span><span><u>О</u>кно</span><span><u>С</u>правка</span><span><u>Б</u>иблиотеки</span>
      </div>
      <div class="tb-row first">
        <div class="tb">${this.renderItems(ROW1A)}</div>
        <div class="tb">${this.renderItems(ROW1B)}</div>
      </div>
      <div class="tb-row">
        <div class="tb">${this.renderItems(ROW2A)}</div>
        <div class="tb">${this.renderItems(ROW2B)}</div>
      </div>
      <div class="body">
        ${this.renderRail()}
        <div class="main">
          <div class="tabs">
            <div class="tab">${icon('part')}<span class="tab-title">Деталь БЕЗ ИМЕНИ1</span><span class="tab-x">×</span></div>
            <span class="tabs-down">▼</span>
          </div>
          <div class="content">
            <div class="panel">
              <div class="panel-head"><span>Дерево модели</span><span class="panel-actions"><span>⊥</span><span>×</span></span></div>
              <div class="panel-tools">
                <div class="btn" style="width:18px">${icon('treeTool')}</div>
                <div class="btn" style="width:30px;margin-left:3px">${icon('treeGray')}<span class="caret">▾</span></div>
                <div class="sep" style="width:8px"></div>
                <div class="btn sel" style="width:19px;margin-left:1px">${icon('treeDoc')}</div>
                <div class="btn" style="width:20px">${icon('treeDoc2')}</div>
              </div>
              ${this.renderTree()}
              <div class="hint"></div>
              <div class="pane-tabs"><div class="pane-tab active">Построение</div><div class="pane-tab">Исполнения</div></div>
            </div>
            <div class="view"><cad-view></cad-view></div>
          </div>
          <div class="bottom">
            <div class="actions">
              ${icon('enter')}
              <div class="stop">${icon('stop')}<div class="stop-t">STOP</div></div>
              ${icon('expand', 14)}
              ${icon('grayX')}
              ${icon('help')}
            </div>
            <div class="prop-wrap">
              ${this.renderProp()}
              <div class="p-tabs">
                ${PROP_TABS.map((t) => html`<div class="p-tab ${t.active ? 'active' : ''}" style="width:${t.w}px;margin-right:${t.mr}px">${icon(t.i)}<span>${t.label}</span></div>`)}
              </div>
            </div>
          </div>
        </div>
      </div>
      <svg class="cursor" width="14" height="22" viewBox="0 0 14 22"><path d="M1 1v16l4-4 3 7 3-1-3-7h5z" fill="#fff" stroke="#000"/></svg>
    </div>`;
  }
}
